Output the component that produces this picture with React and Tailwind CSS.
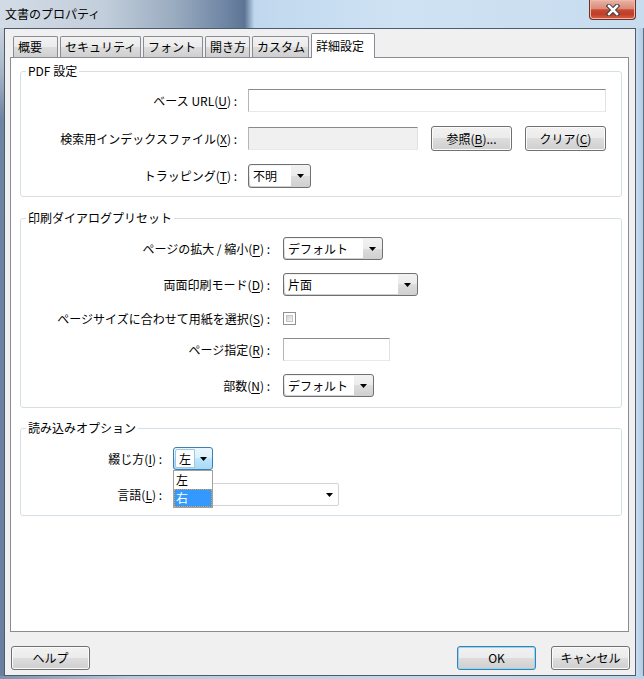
import React from 'react';

const btnBg = 'bg-[linear-gradient(#f2f2f2_0%,#ebebeb_50%,#dddddd_50%,#cfcfcf_100%)]';

const Arrow = () => (
  <svg width="7" height="4" viewBox="0 0 7 4">
    <path d="M0 0H7L3.5 4Z" fill="#000" />
  </svg>
);

const U = ({ children }) => <span className="underline underline-offset-[2px]">{children}</span>;

const Label = ({ className, children }) => (
  <div className={`shrink-0 text-right whitespace-nowrap ${className}`}>{children}</div>
);

const TextBox = ({ className = '', disabled }) => (
  <div
    className={`h-[23px] border border-t-[#8a8a8a] border-l-[#b5b5b5] border-r-[#dfe3e8] border-b-[#e3e9ef] ${
      disabled ? 'bg-[#f0f0f0]' : 'bg-white'
    } ${className}`}
  />
);

const Button = ({ className = '', def, children }) => (
  <div
    className={`flex items-center justify-center rounded-[3px] border ${btnBg} ${
      def
        ? 'border-[#3c7fb1] shadow-[inset_0_0_0_1px_#8fd8f8]'
        : 'border-[#707070] shadow-[inset_0_0_0_1px_#fbfbfb]'
    } ${className}`}
  >
    {children}
  </div>
);

const Combo = ({ className = '', value, focus, children }) => (
  <div
    className={`relative flex h-[23px] rounded-[3px] border p-[1px] ${
      focus
        ? 'border-[#3c7fb1] bg-[linear-gradient(#eaf6fd_0%,#d9f0fc_50%,#bee6fd_50%,#a7d9f5_100%)]'
        : `border-[#707070] ${btnBg}`
    } ${className}`}
  >
    <div
      className={`flex items-center rounded-l-[2px] bg-white pl-[3px] ${
        focus ? 'w-[22px] border border-[#9cc7e6] pl-[2px]' : 'flex-1'
      }`}
    >
      {value}
    </div>
    {focus && <div className="flex-1" />}
    <div className="flex w-[18px] items-center justify-center">
      <Arrow />
    </div>
    {children}
  </div>
);

const Checkbox = () => (
  <div className="h-[13px] w-[13px] border border-[#8e8f8f] bg-white p-[2px]">
    <div className="h-full w-full border border-[#c2c5ca] bg-[linear-gradient(135deg,#cdd1d7,#f5f5f5)]" />
  </div>
);

const Tab = ({ className = '', children }) => (
  <div
    className={`flex h-[21px] items-center rounded-t-[2px] border border-b-0 border-[#898c95] pl-[4px] whitespace-nowrap ${btnBg} ${className}`}
  >
    {children}
  </div>
);

const Group = ({ title, className = '', children }) => (
  <fieldset className={`ml-[9px] w-[602px] rounded-[3px] border border-[#d5dfe5] ${className}`}>
    <legend className="ml-[5px] px-[2px] leading-[16px]">{title}</legend>
    {children}
  </fieldset>
);

const CloseX = () => (
  <svg width="14" height="12" viewBox="0 0 14 12">
    <path d="M3 2L11 10M11 2L3 10" stroke="#3a3a3a" strokeWidth="4.5" strokeLinecap="square" />
    <path d="M3 2L11 10M11 2L3 10" stroke="#ffffff" strokeWidth="2.5" strokeLinecap="square" />
  </svg>
);

export default function App() {
  return (
    <div className="h-[679px] w-[644px] overflow-hidden bg-[#bcd5ec] font-['Noto_Sans_CJK_JP','Noto_Sans',sans-serif] text-[12px] leading-[16px] text-black">
      {/* title bar */}
      <div className="flex h-[28px] items-start justify-between bg-[linear-gradient(90deg,#d3dce6_0%,#c2cedb_16%,#9aacc0_27%,#6f85a4_35%,#5d7494_38%,#c0d8ee_39.5%,#cfe2f3_62%,#c7dcef_100%)]">
        <div className="flex h-[28px] items-center pl-[5px]">文書のプロパティ</div>
        <div className="mr-[8px] flex h-[20px] w-[47px] items-center justify-center rounded-b-[4px] border border-t-0 border-[#6e2f24] bg-[linear-gradient(#e9b4a7_0%,#db8b78_45%,#c84a32_52%,#c13d28_75%,#d66544_100%)] shadow-[inset_0_0_0_1px_#eeb9a9]">
          <CloseX />
        </div>
      </div>

      <div className="flex h-[648px]">
        <div className="w-[4px] bg-[linear-gradient(#c9d3de_0%,#a5b4c6_7%,#6f84a3_14%,#6a7fa0_100%)]" />

        {/* client */}
        <div className="flex w-[632px] flex-col border border-[#4f5b6b] bg-[#f0f0f0]">
          <div className="ml-[8px] mt-[4px] flex h-[24px] items-end gap-[2px]">
            <Tab className="w-[45px]">概要</Tab>
            <Tab className="w-[81px]">セキュリティ</Tab>
            <Tab className="w-[60px]">フォント</Tab>
            <Tab className="w-[45px]">開き方</Tab>
            <Tab className="w-[57px]">カスタム</Tab>
            <div className="relative z-10 -mb-[1px] flex h-[25px] w-[64px] items-center rounded-t-[2px] border border-b-0 border-[#898c95] bg-white pl-[4px]">
              詳細設定
            </div>
          </div>

          <div className="ml-[5px] h-[575px] w-[619px] border border-[#898c95] bg-white">
            <Group title="PDF 設定" className="mt-[5px] pb-[8px]">
              <div className="mt-[10px] flex h-[23px] items-center">
                <Label className="mr-[11px] w-[216px]">
                  ベース URL(<U>U</U>) :
                </Label>
                <TextBox className="w-[358px]" />
              </div>
              <div className="mt-[14px] flex h-[25px] items-center">
                <Label className="mr-[11px] w-[216px]">
                  検索用インデックスファイル(<U>X</U>) :
                </Label>
                <TextBox disabled className="w-[170px]" />
                <Button className="ml-[13px] h-[25px] w-[81px]">
                  参照(<U>B</U>)...
                </Button>
                <Button className="ml-[13px] h-[25px] w-[81px]">
                  クリア(<U>C</U>)
                </Button>
              </div>
              <div className="mt-[13px] flex h-[24px] items-center">
                <Label className="mr-[11px] w-[216px]">
                  トラッピング(<U>T</U>) :
                </Label>
                <Combo className="h-[24px] w-[63px]" value="不明" />
              </div>
            </Group>

            <Group title="印刷ダイアログプリセット" className="mt-[13px] pb-[10px]">
              <div className="mt-[11px] flex h-[23px] items-center">
                <Label className="mr-[13px] w-[249px]">
                  ページの拡大 / 縮小(<U>P</U>) :
                </Label>
                <Combo className="w-[100px]" value="デフォルト" />
              </div>
              <div className="mt-[13px] flex h-[23px] items-center">
                <Label className="mr-[13px] w-[249px]">
                  両面印刷モード(<U>D</U>) :
                </Label>
                <Combo className="w-[135px]" value="片面" />
              </div>
              <div className="mt-[16px] flex h-[13px] items-center">
                <Label className="mr-[13px] w-[249px]">
                  ページサイズに合わせて用紙を選択(<U>S</U>) :
                </Label>
                <Checkbox />
              </div>
              <div className="mt-[13px] flex h-[23px] items-center">
                <Label className="mr-[13px] w-[249px]">
                  ページ指定(<U>R</U>) :
                </Label>
                <TextBox className="w-[107px]" />
              </div>
              <div className="mt-[13px] flex h-[23px] items-center">
                <Label className="mr-[13px] w-[249px]">
                  部数(<U>N</U>) :
                </Label>
                <Combo className="w-[91px]" value="デフォルト" />
              </div>
            </Group>

            <Group title="読み込みオプション" className="mt-[12px] pb-[9px]">
              <div className="relative z-10 mt-[11px] flex h-[23px] items-center">
                <Label className="mr-[11px] w-[141px]">
                  綴じ方(<U>I</U>) :
                </Label>
                <Combo focus className="w-[40px]" value="左">
                  <div className="absolute left-[-1px] top-[22px] w-[40px] border border-[#a0a0a0] bg-white">
                    <div className="flex h-[18px] items-center pl-[2px]">左</div>
                    <div className="flex h-[18px] items-center border border-dotted border-[#e8a13a] bg-[#3399ff] pl-[1px] text-white">
                      右
                    </div>
                  </div>
                </Combo>
              </div>
              <div className="mt-[13px] flex h-[23px] items-center">
                <Label className="mr-[11px] w-[141px]">
                  言語(<U>L</U>) :
                </Label>
                <div className="flex h-[23px] w-[166px] items-center justify-end rounded-[2px] border border-[#d0d3d8] bg-white pr-[5px]">
                  <Arrow />
                </div>
              </div>
            </Group>
          </div>

          <div className="mt-[14px] flex pl-[6px] pr-[5px]">
            <Button className="h-[24px] w-[79px]">ヘルプ</Button>
            <div className="flex-1" />
            <Button def className="h-[24px] w-[79px]">
              OK
            </Button>
            <Button className="ml-[15px] h-[24px] w-[79px]">キャンセル</Button>
          </div>
        </div>

        <div className="w-[8px] border-r border-[#5f6f80] bg-[linear-gradient(90deg,#c5dcf0,#b3cde6)]" />
      </div>

      <div className="h-[3px] bg-[linear-gradient(90deg,#7d92ad,#b7c9db_20%,#c5d6e6_60%,#bcd3e8)]" />
    </div>
  );
}
